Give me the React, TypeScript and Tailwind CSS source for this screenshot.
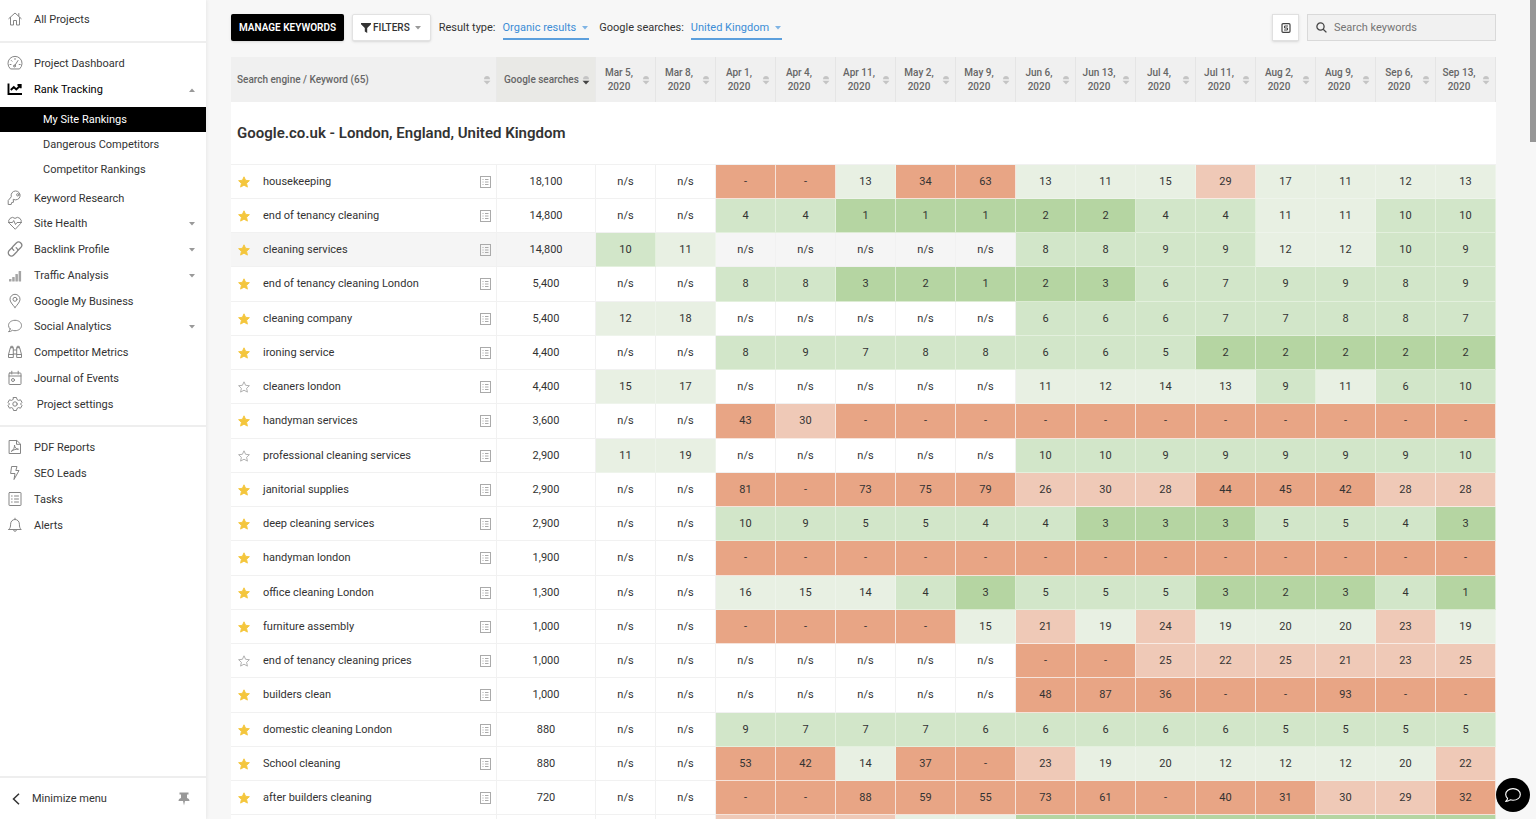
import type { ReactNode } from 'react';
import clsx from 'clsx';

const DATES = [
  'Mar 5,', 'Mar 8,', 'Apr 1,', 'Apr 4,', 'Apr 11,', 'May 2,', 'May 9,', 'Jun 6,',
  'Jun 13,', 'Jul 4,', 'Jul 11,', 'Aug 2,', 'Aug 9,', 'Sep 6,', 'Sep 13,',
];

interface Keyword {
  name: string;
  searches: string;
  ranks: string;
  starred?: boolean;
  hovered?: boolean;
}

const KEYWORDS: Keyword[] = [
  { name: 'housekeeping', searches: '18,100', starred: true, ranks: 'n/s n/s - - 13 34 63 13 11 15 29 17 11 12 13' },
  { name: 'end of tenancy cleaning', searches: '14,800', starred: true, ranks: 'n/s n/s 4 4 1 1 1 2 2 4 4 11 11 10 10' },
  { name: 'cleaning services', searches: '14,800', starred: true, hovered: true, ranks: '10 11 n/s n/s n/s n/s n/s 8 8 9 9 12 12 10 9' },
  { name: 'end of tenancy cleaning London', searches: '5,400', starred: true, ranks: 'n/s n/s 8 8 3 2 1 2 3 6 7 9 9 8 9' },
  { name: 'cleaning company', searches: '5,400', starred: true, ranks: '12 18 n/s n/s n/s n/s n/s 6 6 6 7 7 8 8 7' },
  { name: 'ironing service', searches: '4,400', starred: true, ranks: 'n/s n/s 8 9 7 8 8 6 6 5 2 2 2 2 2' },
  { name: 'cleaners london', searches: '4,400', ranks: '15 17 n/s n/s n/s n/s n/s 11 12 14 13 9 11 6 10' },
  { name: 'handyman services', searches: '3,600', starred: true, ranks: 'n/s n/s 43 30 - - - - - - - - - - -' },
  { name: 'professional cleaning services', searches: '2,900', ranks: '11 19 n/s n/s n/s n/s n/s 10 10 9 9 9 9 9 10' },
  { name: 'janitorial supplies', searches: '2,900', starred: true, ranks: 'n/s n/s 81 - 73 75 79 26 30 28 44 45 42 28 28' },
  { name: 'deep cleaning services', searches: '2,900', starred: true, ranks: 'n/s n/s 10 9 5 5 4 4 3 3 3 5 5 4 3' },
  { name: 'handyman london', searches: '1,900', starred: true, ranks: 'n/s n/s - - - - - - - - - - - - -' },
  { name: 'office cleaning London', searches: '1,300', starred: true, ranks: 'n/s n/s 16 15 14 4 3 5 5 5 3 2 3 4 1' },
  { name: 'furniture assembly', searches: '1,000', starred: true, ranks: 'n/s n/s - - - - 15 21 19 24 19 20 20 23 19' },
  { name: 'end of tenancy cleaning prices', searches: '1,000', ranks: 'n/s n/s n/s n/s n/s n/s n/s - - 25 22 25 21 23 25' },
  { name: 'builders clean', searches: '1,000', starred: true, ranks: 'n/s n/s n/s n/s n/s n/s n/s 48 87 36 - - 93 - -' },
  { name: 'domestic cleaning London', searches: '880', starred: true, ranks: 'n/s n/s 9 7 7 7 6 6 6 6 6 5 5 5 5' },
  { name: 'School cleaning', searches: '880', starred: true, ranks: 'n/s n/s 53 42 14 37 - 23 19 20 12 12 12 20 22' },
  { name: 'after builders cleaning', searches: '720', starred: true, ranks: 'n/s n/s - - 88 59 55 73 61 - 40 31 30 29 32' },
];

const PENDING_RANKS = 'n/s n/s 22 22 22 14 14 3 3 3 3 3 3 3 3';

function rankColor(rank: string) {
  if (rank === 'n/s') return 'border-[#f1f1f1]';
  const n = Number(rank);
  if (rank === '-' || n > 30) return 'bg-[#e8a585] border-[#f6e3da]';
  if (n > 20) return 'bg-[#efc9b7] border-[#f8ebe4]';
  if (n > 10) return 'bg-[#e8f0e3] border-[#eef4eb]';
  if (n > 3) return 'bg-[#d2e6c9] border-[#e3f0dd]';
  return 'bg-[#b5d5a2] border-[#dcebd3]';
}

function Icon({ children, className }: { children: ReactNode; className?: string }) {
  return (
    <svg
      viewBox="0 0 16 16"
      fill="none"
      stroke="currentColor"
      strokeLinecap="round"
      strokeLinejoin="round"
      aria-hidden="true"
      className={clsx('shrink-0', className)}
    >
      {children}
    </svg>
  );
}

const icons = {
  home: <path d="M1.800 7.600 8 2l6.200 5.600M3.500 6.500v7.500h3V9.500h3V14h3V6.500M11.800 2.500v2.500" />,
  gauge: (
    <>
      <path d="M3.200 13.700a7.100 7.100 0 1 1 9.600 0z" />
      <path d="m7.500 11 3.500-5.500M3 9.500h1M4.300 5.500l.7.700M8 3.500v1M12.200 9.500h1" />
      <circle cx="7.500" cy="11" r="1" />
    </>
  ),
  rank: <path d="M1.500 2.500v10.500H15M3.800 9l3-3 2.500 2.500 4-4M10.500 4h3.200v3.200" strokeWidth="1.900" strokeLinecap="butt" strokeLinejoin="miter" />,
  key: (
    <>
      <path d="M6.600 9.500a4.500 4.500 0 1 0-2.300-2.700L1.200 10.500v4h3l.4-1.900 1.500-.3z" />
      <circle cx="10.800" cy="4.800" r="1.200" />
    </>
  ),
  health: (
    <>
      <path d="M8 14 2.300 8.300A3.800 3.800 0 0 1 8 3.400a3.800 3.800 0 0 1 5.700 4.900z" />
      <path d="M1.500 7.500h4L6.700 5.500l1.800 4L10 7.500h4.500" />
    </>
  ),
  link: (
    <g strokeWidth="1.300">
      <path d="M6.800 9.300 5.900 8.400a2 2 0 0 1 0-2.900L9.300 2a3.100 3.100 0 0 1 4.500 4.500L11 9.300" />
      <path d="m9.200 6.700.9.900a2 2 0 0 1 0 2.900L6.700 14a3.100 3.100 0 0 1-4.500-4.500L5 6.700" />
    </g>
  ),
  bars: (
    <g stroke="none" fill="#a5a5a5">
      <rect x="2" y="12" width="2.500" height="2.500" rx=".5" />
      <rect x="5.200" y="10" width="2.500" height="4.500" rx=".5" />
      <rect x="8.400" y="7" width="2.500" height="7.500" rx=".5" />
      <rect x="11.600" y="4" width="2.500" height="10.500" rx=".5" />
    </g>
  ),
  pin: (
    <>
      <path d="M8 14.500C5 11 3 8.700 3 6.300a5 5 0 0 1 10 0c0 2.400-2 4.700-5 8.200z" />
      <circle cx="8" cy="6.300" r="2" />
    </>
  ),
  chat: <path d="M3.200 11A5 5 0 0 1 1.500 7.500C1.500 4.500 4.400 2.300 8 2.300s6.500 2.200 6.500 5.200-2.900 5.200-6.500 5.200a8 8 0 0 1-2.500-.4c-1.200.9-2.500 1.400-4 1.400.9-.8 1.500-1.600 1.700-2.700z" />,
  binoculars: (
    <path d="M6.300 4v9.500H1.500v-3L3.300 4zM9.700 4v9.500h4.800v-3L12.700 4zM6.300 6h3.400M6.300 10h3.400M1.500 10.500h4.800M9.700 10.500h4.800M3.800 4V2.300h2V4M10.200 4V2.300h2V4" />
  ),
  calendar: (
    <>
      <rect x="2" y="3" width="12" height="11.500" rx=".8" />
      <path d="M2 6h12M4.800 1.200V4M11.200 1.200V4" />
      <circle cx="6" cy="10" r="1.500" />
    </>
  ),
  gear: (
    <>
      <path d="m6.500 1.500h3l.5 2 1.500.9 2-.6 1.500 2.600L13.500 8l1.500 1.600-1.500 2.600-2-.6-1.500.9-.5 2h-3l-.5-2-1.500-.9-2 .6L1 9.600 2.500 8 1 6.400l1.500-2.600 2 .6L6 3.500z" />
      <circle cx="8" cy="8" r="2.200" />
    </>
  ),
  pdf: (
    <>
      <path d="M2.500 1.500h7.300L13.500 5v9.500h-11zM9.500 1.500V5.300h4" />
      <path d="M4.500 12.200c2-1.200 3.200-3.600 3-6.200.2 2.600 1.500 4 4 4.200-2.500-.2-4.700.4-7 2z" />
    </>
  ),
  bolt: <path d="M5 1.500h5L8.800 5.500H12L7 14.500l1-6H4z" />,
  tasks: (
    <>
      <rect x="2" y="1.500" width="12" height="13" rx=".5" />
      <path d="M4.500 5h.7M4.500 8h.7M4.500 11h.7M7.500 5h4M7.500 8h4M7.500 11h4" />
    </>
  ),
  bell: <path d="M1.800 12.500h12.400c-1.300-1.300-1.800-2.500-1.800-5.300C12.400 4.500 10.500 2.500 8 2.500S3.600 4.500 3.600 7.200c0 2.800-.5 4-1.800 5.300zM8 1.200v1M6.500 12.800a1.500 1.500 0 0 0 3 0" />,
};

interface NavEntry {
  label: string;
  icon: ReactNode;
  expandable?: boolean;
}

const MAIN_NAV: NavEntry[] = [
  { label: 'Keyword Research', icon: icons.key },
  { label: 'Site Health', icon: icons.health, expandable: true },
  { label: 'Backlink Profile', icon: icons.link, expandable: true },
  { label: 'Traffic Analysis', icon: icons.bars, expandable: true },
  { label: 'Google My Business', icon: icons.pin },
  { label: 'Social Analytics', icon: icons.chat, expandable: true },
  { label: 'Competitor Metrics', icon: icons.binoculars },
  { label: 'Journal of Events', icon: icons.calendar },
  { label: '\u00a0Project settings', icon: icons.gear },
];

const TOOLS_NAV: NavEntry[] = [
  { label: 'PDF Reports', icon: icons.pdf },
  { label: 'SEO Leads', icon: icons.bolt },
  { label: 'Tasks', icon: icons.tasks },
  { label: 'Alerts', icon: icons.bell },
];

function Caret({ up, className }: { up?: boolean; className?: string }) {
  return (
    <svg viewBox="0 0 8 4" aria-hidden="true" className={clsx('h-1 w-2 shrink-0', className ?? 'text-[#999]')}>
      <path d={up ? 'M1 4 4 .5 7 4z' : 'M1 0 4 3.500 7 0z'} fill="currentColor" />
    </svg>
  );
}

function NavItem({ label, icon, expandable }: NavEntry) {
  return (
    <a href="#" className="flex h-[26px] items-center pl-[7px] pr-[10px] nth-[4n]:h-[25px]">
      <Icon className="mb-[2px] size-4 text-[#858585]">{icon}</Icon>
      <span className="flex-1 pl-[11px]">{label}</span>
      {expandable && <Caret />}
    </a>
  );
}

function SortIcon({ active }: { active?: boolean }) {
  return (
    <svg viewBox="0 0 8 10" aria-hidden="true" className="h-[10px] w-2 shrink-0">
      <path d="M1 4.200C1 2.200 2.500 1 4 1s3 1.200 3 3.200z" fill="#c4c4c4" />
      <path d="M.5 5.800h7L4 9.500z" fill={active ? '#444' : '#c4c4c4'} />
    </svg>
  );
}

function Star({ filled }: { filled?: boolean }) {
  return (
    <svg viewBox="0 0 12 12" aria-hidden="true" className="size-3">
      <path
        d="m6 .800 1.600 3.500 3.800.400-2.800 2.600.800 3.800L6 9.200l-3.400 1.900.800-3.800L.600 4.700l3.800-.400z"
        fill={filled ? '#f4c63d' : 'none'}
        stroke={filled ? '#f4c63d' : '#a8a8a8'}
        strokeWidth=".9"
        strokeLinejoin="round"
      />
    </svg>
  );
}

function Sidebar() {
  return (
    <aside className="flex w-[206px] shrink-0 flex-col bg-white text-[#333] shadow-[1px_0_3px_#e8e8e8]">
      <div className="border-b-2 border-[#eee] pt-[7px] pb-2">
        <NavItem label="All Projects" icon={icons.home} />
      </div>
      <nav className="border-b-2 border-[#eee] pt-2 pb-2">
        <NavItem label="Project Dashboard" icon={icons.gauge} />
        <a href="#" className="flex h-[26px] items-center pl-[7px] pr-[10px] text-black">
          <Icon className="mb-[2px] size-4">{icons.rank}</Icon>
          <span className="flex-1 pl-[11px]">Rank Tracking</span>
          <Caret up />
        </a>
        <div className="pt-1 pb-1">
          <a href="#" className="flex h-[25px] items-center bg-black pl-[43px] text-white">My Site Rankings</a>
          <a href="#" className="flex h-[25px] items-center pl-[43px]">Dangerous Competitors</a>
          <a href="#" className="flex h-[25px] items-center pl-[43px]">Competitor Rankings</a>
        </div>
        {MAIN_NAV.map((item) => (
          <NavItem key={item.label} {...item} />
        ))}
      </nav>
      <nav className="pt-2">
        {TOOLS_NAV.map((item) => (
          <NavItem key={item.label} {...item} />
        ))}
      </nav>
      <button className="mt-auto flex h-[43px] items-center border-t-2 border-[#eee] pl-3 pr-4 text-left">
        <svg viewBox="0 0 8 12" fill="none" stroke="currentColor" strokeWidth="1.500" aria-hidden="true" className="h-3 w-2">
          <path d="M7 .700 1.500 6 7 11.300" />
        </svg>
        <span className="flex-1 pl-3">Minimize menu</span>
        <svg viewBox="0 0 12 14" aria-hidden="true" className="h-[14px] w-3 text-[#999]">
          <path d="M1.500.5h9v2H9v3.500c1.500.5 2.500 1.300 2.500 3H7L6 13.500 5 9H.5c0-1.700 1-2.500 2.500-3V2.500H1.500z" fill="currentColor" />
        </svg>
      </button>
    </aside>
  );
}

function Toolbar() {
  return (
    <div className="flex h-[27px] items-center">
      <button className="h-[27px] rounded-[2px] bg-black px-2 text-[10px] font-semibold text-white shadow-sm">MANAGE KEYWORDS</button>
      <button className="ml-2 flex h-[27px] items-center rounded-[2px] border border-[#e2e2e2] bg-white px-2 text-[10px] font-medium text-[#333] shadow">
        <svg viewBox="0 0 10 10" aria-hidden="true" className="size-[10px]">
          <path d="M0 0h10v1.200L6.200 5v5L3.800 8.500V5L0 1.200z" fill="currentColor" />
        </svg>
        <span className="pl-[2px] pr-1">FILTERS</span>
        <Caret />
      </button>
      <span className="pl-2">Result type:</span>
      <button className="ml-[7px] flex h-6 items-center gap-[5px] border-b-2 border-[#5c9fdc] pt-[2px] text-[#3c8dd6]">
        Organic results
        <Caret className="text-[#7fb4e4]" />
      </button>
      <span className="pl-[10px]">Google searches:</span>
      <button className="ml-[7px] flex h-6 items-center gap-[5px] border-b-2 border-[#5c9fdc] pt-[2px] text-[#3c8dd6]">
        United Kingdom
        <Caret className="text-[#7fb4e4]" />
      </button>
      <button aria-label="Table view" className="ml-auto flex size-[27px] items-center justify-center border border-[#e0e0e0] bg-white shadow">
        <svg viewBox="0 0 10 10" fill="none" stroke="#444" aria-hidden="true" className="size-[10px]">
          <rect x="1" y=".7" width="8" height="8.600" rx="1" strokeWidth="1.200" />
          <path d="M7 3H3.500v2h3v2H3" />
        </svg>
      </button>
      <label className="ml-2 flex h-[27px] w-[189px] items-center border border-[#d9d9d9] bg-[#f1f1f1] pl-2">
        <svg viewBox="0 0 11 11" fill="none" stroke="#444" strokeWidth="1.300" aria-hidden="true" className="size-[11px] shrink-0">
          <circle cx="4.500" cy="4.500" r="3.600" />
          <path d="m7.200 7.200 3.200 3.200" />
        </svg>
        <input
          type="text"
          aria-label="Search keywords"
          placeholder="Search keywords"
          className="w-full min-w-0 bg-transparent pl-[7px] outline-none placeholder:text-[#757575]"
        />
      </label>
    </div>
  );
}

function KeywordRow({ name, searches, ranks, starred, hovered }: Keyword) {
  return (
    <tr className={clsx('h-[34px] nth-[4n+1]:h-[35px]', hovered && 'bg-[#f5f5f5]')}>
      <td className="border-r border-b border-[#f1f1f1]">
        <div className="flex items-center pl-[7px] pr-[5px]">
          <button aria-label={starred ? 'Remove from favorites' : 'Add to favorites'}>
            <Star filled={starred} />
          </button>
          <span className="flex-1 truncate pl-[13px]">{name}</span>
          <svg viewBox="0 0 11 12" fill="none" stroke="#aaa" aria-hidden="true" className="h-3 w-[11px]">
            <rect x=".5" y=".5" width="10" height="11" />
            <path d="M2.500 3.500h1M2.500 6h1M2.500 8.500h1M5 3.500h3.500M5 6h3.500M5 8.500h3.500" />
          </svg>
        </div>
      </td>
      <td className="border-r border-b border-[#f1f1f1] text-center">{searches}</td>
      {ranks.split(' ').map((rank, i) => (
        <td key={i} className={clsx('border-r border-b text-center', rankColor(rank))}>
          {rank}
        </td>
      ))}
    </tr>
  );
}

function RankingsTable() {
  return (
    <table className="mt-4 w-full table-fixed border-separate border-spacing-0 bg-white">
      <colgroup>
        <col />
        <col className="w-[99px]" />
        {DATES.map((date) => (
          <col key={date} className="w-[60px]" />
        ))}
      </colgroup>
      <thead className="bg-[#f0f0f0] text-[10px] leading-[14px] text-[#666]">
        <tr className="h-[45px]">
          <th className="border-r border-[#e9e9e9] font-medium">
            <div className="flex items-center justify-between pl-[6px] pr-[5px]">
              Search engine / Keyword (65)
              <SortIcon />
            </div>
          </th>
          <th className="border-r border-[#e9e9e9] bg-[#e9e9e6] font-medium">
            <div className="flex items-center justify-between pl-[7px] pr-[5px]">
              Google searches
              <SortIcon active />
            </div>
          </th>
          {DATES.map((date) => (
            <th key={date} className="border-r border-[#e5e5e5] font-medium">
              <div className="flex items-center pr-[5px]">
                <span className="flex-1">
                  {date}
                  <br />
                  2020
                </span>
                <SortIcon />
              </div>
            </th>
          ))}
        </tr>
      </thead>
      <tbody>
        <tr className="h-[63px]">
          <td colSpan={17} className="border-b border-[#f1f1f1] pl-[6px]">
            <h2 className="text-[15px] font-semibold">Google.co.uk - London, England, United Kingdom</h2>
          </td>
        </tr>
        {KEYWORDS.map((keyword) => (
          <KeywordRow key={keyword.name} {...keyword} />
        ))}
        <tr className="h-[34px]">
          <td className="border-r border-[#f1f1f1]" />
          <td className="border-r border-[#f1f1f1]" />
          {PENDING_RANKS.split(' ').map((rank, i) => (
            <td key={i} className={clsx('border-r', rankColor(rank))} />
          ))}
        </tr>
      </tbody>
    </table>
  );
}

export default function App() {
  return (
    <div className="relative flex h-screen overflow-hidden bg-[#f7f7f7] font-[Roboto,sans-serif] text-[11px] leading-4 text-[#333]">
      <Sidebar />
      <main className="min-w-0 flex-1 overflow-hidden pt-[14px] pr-10 pl-[25px]">
        <Toolbar />
        <RankingsTable />
      </main>
      <div className="absolute top-0 right-0 h-[142px] w-[6px] bg-[#969696]" />
      <button aria-label="Open chat" className="absolute right-[6px] bottom-[7px] flex size-[34px] items-center justify-center rounded-full bg-black text-white">
        <Icon className="size-[18px]">{icons.chat}</Icon>
      </button>
    </div>
  );
}
